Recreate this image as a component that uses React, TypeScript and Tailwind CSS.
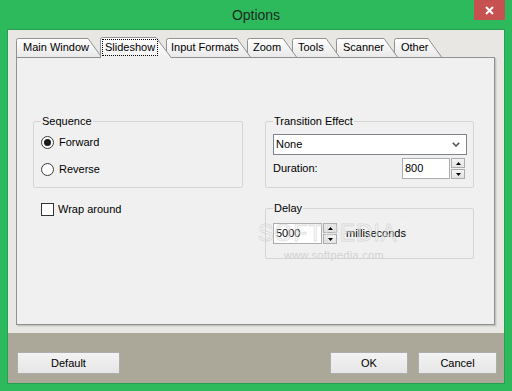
import clsx from "clsx";

const ui = "font-['Liberation_Sans',Arial,sans-serif] text-[11px] leading-[13px] text-black";

const tabs = [
  { label: "Main Window", w: 86, cls: "w-[86px] mr-[-2px] z-[9] pl-[7px]" },
  { label: "Slideshow", w: 72, cls: "w-[72px] mr-[-6px] z-30 pl-[2px]", selected: true },
  { label: "Input Formats", w: 85, cls: "w-[85px] mr-[-4px] z-[7] pl-[5px]" },
  { label: "Zoom", w: 50, cls: "w-[50px] mr-[-5px] z-[6] pl-[6px]" },
  { label: "Tools", w: 48, cls: "w-[48px] mr-[-4px] z-[5] pl-[6px]" },
  { label: "Scanner", w: 62, cls: "w-[62px] mr-[-4px] z-[4] pl-[7px]" },
  { label: "Other", w: 48, cls: "w-[48px] z-[3] pl-[7px]" },
];

export default function App() {
  return (
    <div className="flex h-[391px] w-[512px] flex-col overflow-hidden bg-[#2cba5c]">
      <TitleBar />
      <div className={clsx("mx-[7px] flex h-[355px] flex-col border border-[#25a04f]", ui)}>
        <div className="flex h-[303px] flex-col bg-[#e9e7e3] px-[8px] pt-[7px]">
          <div className="flex h-[20px] items-end">
            {tabs.map((t) => (
              <Tab key={t.label} label={t.label} w={t.w} selected={t.selected} className={t.cls} />
            ))}
          </div>
          <Panel />
        </div>
        <div className="flex flex-1 items-start bg-[#aca899] pl-[9px] pr-[7px] pt-[19px]">
          <Button className="w-[103px]">Default</Button>
          <Button className="ml-auto w-[78px]">OK</Button>
          <Button className="ml-[10px] w-[79px]">Cancel</Button>
        </div>
      </div>
    </div>
  );
}

function TitleBar() {
  return (
    <div className="grid h-[29px] shrink-0 grid-cols-[1fr_auto_1fr]">
      <div />
      <div className="flex items-center pt-px font-['Liberation_Sans',Arial,sans-serif] text-[14px] text-[#1e2a22]">
        Options
      </div>
      <div className="flex justify-end pr-[7px]">
        <div className="flex h-[20px] w-[31px] items-center justify-center bg-[#c75050]">
          <svg width="9" height="9" viewBox="0 0 9 9">
            <path d="M1 1 L8 8 M8 1 L1 8" stroke="#fff" strokeWidth="2" />
          </svg>
        </div>
      </div>
    </div>
  );
}

function Tab({
  label,
  w,
  selected,
  className,
}: {
  label: string;
  w: number;
  selected?: boolean;
  className?: string;
}) {
  const h = selected ? 21 : 19;
  const s = selected ? 16 : 14;
  const edge = `M0.5 ${h} L0.5 2.5 Q0.5 0.5 2.5 0.5 L${w - s} 0.5 L${w - 0.5} ${h}`;
  const gid = `tab-${label.replace(/\s/g, "")}`;
  return (
    <div
      className={clsx(
        "relative flex shrink-0 items-center",
        selected ? "mb-[-1px] h-[21px] pb-px" : "h-[19px]",
        className,
      )}
    >
      <svg width={w} height={h} className="absolute left-0 top-0">
        <defs>
          <linearGradient id={gid} x1="0" y1="0" x2="0" y2="1">
            <stop offset="0" stopColor="#ffffff" />
            <stop offset="1" stopColor={selected ? "#f0f0f0" : "#e9e9e9"} />
          </linearGradient>
        </defs>
        <path d={edge + " Z"} fill={`url(#${gid})`} />
        <path d={edge} fill="none" stroke="#919191" />
      </svg>
      <span
        className={clsx(
          "relative whitespace-nowrap",
          selected && "border border-dotted border-black px-[2px] py-px",
        )}
      >
        {label}
      </span>
    </div>
  );
}

function Panel() {
  return (
    <div className="relative z-10 h-[268px] w-[479px] border border-[#919191] bg-[#f0f0f0] pl-[16px] pt-[57px] shadow-[1px_1px_0_#c6c4be,2px_2px_0_#dad8d3]">
      <div className="grid grid-cols-[210px_209px] gap-x-[22px]">
        <div className="flex flex-col">
          <GroupBox title="Sequence" className="h-[73px]">
            <label className="mt-[7px] flex h-[14px] items-center gap-[5px]">
              <Radio checked />
              Forward
            </label>
            <label className="mt-[13px] flex h-[14px] items-center gap-[5px]">
              <Radio />
              Reverse
            </label>
          </GroupBox>
          <label className="ml-[8px] mt-[15px] flex h-[13px] items-center gap-[4px]">
            <span className="h-[13px] w-[13px] border border-[#333] bg-white" />
            Wrap around
          </label>
        </div>
        <div className="flex flex-col">
          <GroupBox title="Transition Effect" className="h-[73px] pr-[6px]">
            <div className="mt-[6px] flex h-[21px] items-center justify-between border border-[#7f848c] bg-white pl-[2px] pr-[6px]">
              None
              <svg width="8" height="5" viewBox="0 0 8 5">
                <path d="M0.8 0.8 L4 4 L7.2 0.8" fill="none" stroke="#555" strokeWidth="1.6" />
              </svg>
            </div>
            <div className="mt-[3px] flex h-[21px] items-center pr-[2px]">
              Duration:
              <NumberBox value="800" className="ml-auto w-[48px]" />
              <Spin />
            </div>
          </GroupBox>
          <GroupBox title="Delay" className="mt-[14px] h-[57px]">
            <div className="mt-[8px] flex h-[21px] items-center">
              <NumberBox value="5000" className="w-[49px]" />
              <Spin />
              <span className="ml-[9px]">milliseconds</span>
            </div>
          </GroupBox>
        </div>
      </div>
      {/* watermark */}
      <div className="pointer-events-none absolute left-[241px] top-[163px] font-['Liberation_Sans',Arial,sans-serif] text-[23px] leading-[24px] tracking-[1px] text-white/40 [-webkit-text-stroke:1px_rgba(190,190,190,0.45)]">
        SOFTPEDIA<span className="align-top text-[8px] leading-[8px] [-webkit-text-stroke:0]">™</span>
      </div>
      <div className="pointer-events-none absolute left-[267px] top-[191px] text-[11px] tracking-[0.3px] text-[#d2d2d2]">
        www.softpedia.com
      </div>
    </div>
  );
}

function GroupBox({
  title,
  className,
  children,
}: {
  title: string;
  className?: string;
  children: React.ReactNode;
}) {
  return (
    <fieldset className={clsx("flex flex-col rounded-[2px] border border-[#d5d5d5] pl-[7px]", className)}>
      <legend className="px-px leading-[13px]">{title}</legend>
      {children}
    </fieldset>
  );
}

function Radio({ checked }: { checked?: boolean }) {
  return (
    <span className="flex h-[13px] w-[13px] items-center justify-center rounded-full border border-[#3c3c3c] bg-white">
      {checked && <span className="h-[7px] w-[7px] rounded-full bg-[#1a1a1a]" />}
    </span>
  );
}

function NumberBox({ value, className }: { value: string; className?: string }) {
  return (
    <div className={clsx("flex h-[21px] items-center border border-[#abadb3] bg-white pl-[2px]", className)}>
      {value}
    </div>
  );
}

function Spin() {
  return (
    <div className="ml-px flex h-[21px] w-[14px] flex-col gap-px">
      <SpinButton up />
      <SpinButton />
    </div>
  );
}

function SpinButton({ up }: { up?: boolean }) {
  return (
    <div className="flex h-[10px] items-center justify-center border border-[#acacac] bg-gradient-to-b from-[#f4f4f4] to-[#e3e3e3]">
      <svg width="5" height="3" viewBox="0 0 5 3">
        <path d={up ? "M0 3 L2.5 0 L5 3 Z" : "M0 0 L2.5 3 L5 0 Z"} fill="#000" />
      </svg>
    </div>
  );
}

function Button({ className, children }: { className?: string; children: React.ReactNode }) {
  return (
    <button className={clsx("flex h-[22px] items-center justify-center border border-[#adadad] bg-gradient-to-b from-[#f3f3f3] to-[#e6e6e6]", className)}>
      {children}
    </button>
  );
}
